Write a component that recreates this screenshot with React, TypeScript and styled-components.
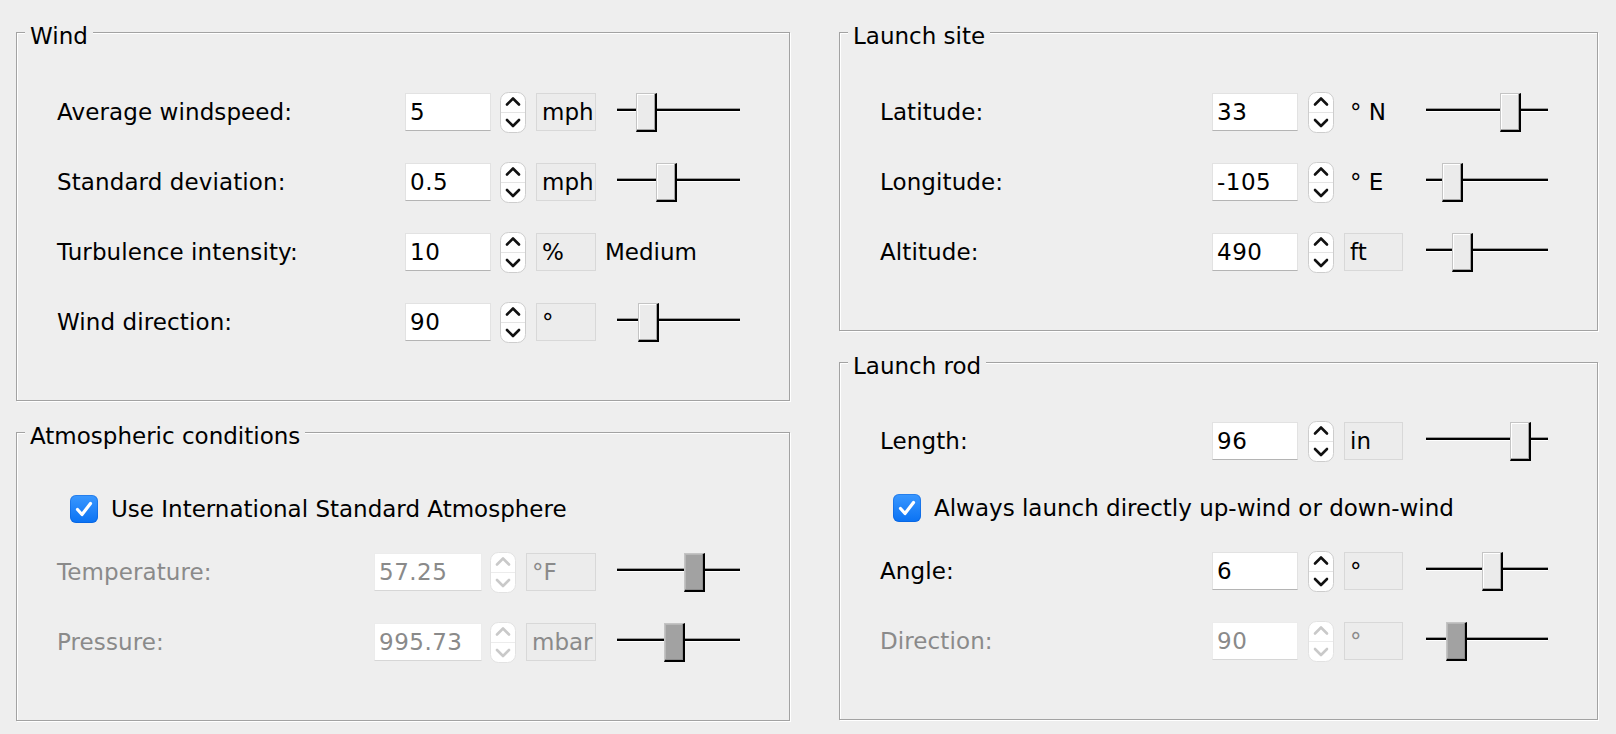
import React from 'react';
import styled, { createGlobalStyle } from 'styled-components';

const Global = createGlobalStyle`
  html, body { margin: 0; padding: 0; background: #eeeeee; }
  body {
    font-family: "DejaVu Sans", "Liberation Sans", sans-serif;
    font-size: 23px;
    color: #000;
  }
`;

const Page = styled.main`
  box-sizing: border-box;
  width: 1616px;
  height: 734px;
  display: grid;
  grid-template-columns: 774px 759px;
  align-items: start;
  column-gap: 49px;
  padding: 32px 18px 0 16px;
`;

const Column = styled.div`
  display: flex;
  flex-direction: column;
  gap: 31px;
`;

const Group = styled.section<{ $pt: number }>`
  position: relative;
  display: flex;
  flex-direction: column;
  gap: 32px;
  padding: ${(p) => p.$pt}px 49px 59px 40px;
  border: 1px solid #a2a2a2;
  box-shadow: inset 1px 1px 0 #ffffff, 1px 1px 0 #ffffff;
`;

const Legend = styled.h2`
  position: absolute;
  top: -10px;
  left: 8px;
  margin: 0;
  padding: 0 5px;
  background: #eeeeee;
  font-size: 23px;
  font-weight: normal;
  line-height: 26px;
  white-space: nowrap;
`;

const Row = styled.div`
  display: flex;
  align-items: center;
  height: 38px;
`;

const Label = styled.span<{ $disabled?: boolean }>`
  flex: 1;
  white-space: nowrap;
  letter-spacing: 0.1px;
  color: ${(p) => (p.$disabled ? '#8a8a8a' : '#000')};
`;

const Field = styled.input<{ $w: number; $disabled?: boolean }>`
  box-sizing: border-box;
  flex-shrink: 0;
  width: ${(p) => p.$w}px;
  height: 38px;
  margin: 0;
  padding: 0 0 0 4px;
  font: inherit;
  letter-spacing: 0.5px;
  color: ${(p) => (p.$disabled ? '#8a8a8a' : '#000')};
  -webkit-text-fill-color: ${(p) => (p.$disabled ? '#8a8a8a' : '#000')};
  opacity: 1;
  background: #ffffff;
  border: 1px solid ${(p) => (p.$disabled ? '#ececec' : '#e2e2e2')};
  border-bottom-color: ${(p) => (p.$disabled ? '#d6d6d6' : '#b4b4b4')};
  border-radius: 0;
  outline: none;
`;

const SpinBox = styled.span<{ $gap: number }>`
  display: block;
  flex-shrink: 0;
  width: 26px;
  height: 41px;
  margin-left: ${(p) => p.$gap}px;
  svg { display: block; }
`;

const Unit = styled.span<{ $w: number; $boxed: boolean; $disabled?: boolean }>`
  box-sizing: border-box;
  flex-shrink: 0;
  display: flex;
  align-items: center;
  width: ${(p) => p.$w}px;
  height: 38px;
  margin-left: 10px;
  padding-left: 5px;
  white-space: nowrap;
  color: ${(p) => (p.$disabled ? '#8a8a8a' : '#000')};
  background: ${(p) => (p.$boxed ? '#ececec' : 'transparent')};
  border: 1px solid ${(p) => (p.$boxed ? '#d8d8d8' : 'transparent')};
`;

const Slider = styled.div<{ $w: number; $gap: number }>`
  position: relative;
  flex-shrink: 0;
  width: ${(p) => p.$w}px;
  height: 39px;
  margin-left: ${(p) => p.$gap}px;
  &::before {
    content: '';
    position: absolute;
    left: 0;
    right: 0;
    top: 15px;
    height: 2px;
    background: #000;
    border-top: 1px solid #9c9c9c;
    border-bottom: 1px solid #ffffff;
  }
`;

const Thumb = styled.span<{ $disabled?: boolean }>`
  position: absolute;
  top: 0;
  box-sizing: border-box;
  width: 21px;
  height: 39px;
  background: ${(p) => (p.$disabled ? '#a2a2a2' : '#ebebeb')};
  border-style: solid;
  border-width: 1px 2px 2px 1px;
  border-color: #c4c4c4 #000 #000 #c4c4c4;
  box-shadow: inset -1px -1px 0 ${(p) => (p.$disabled ? '#8c8c8c' : '#a6a6a6')},
    inset 1px 1px 0 ${(p) => (p.$disabled ? '#b8b8b8' : '#ffffff')};
`;

const Level = styled.span`
  flex-shrink: 0;
  width: 135px;
  margin-left: 9px;
  white-space: nowrap;
`;

const CheckRow = styled.label`
  display: flex;
  align-items: center;
  gap: 13px;
  height: 28px;
  margin: 2px 0 -2px;
  padding-left: 13px;
  white-space: nowrap;
`;

const CheckBox = styled.span`
  flex-shrink: 0;
  width: 28px;
  height: 28px;
  border-radius: 6px;
  background: linear-gradient(#3a98ff, #0a72f3);
  box-shadow: inset 0 0 0 1px rgba(0, 80, 200, 0.35);
  svg { display: block; }
`;

const Spinner = ({ gap, disabled }: { gap: number; disabled?: boolean }) => {
  const c = disabled ? '#c9c9c9' : '#111';
  return (
    <SpinBox $gap={gap}>
      <svg width="26" height="41" viewBox="0 0 26 41">
        <rect x="0.5" y="0.5" width="25" height="40" rx="8" fill="#fff" stroke={disabled ? '#e2e2e2' : '#cdcdcd'} />
        <line x1="1" y1="20.5" x2="25" y2="20.5" stroke={disabled ? '#ececec' : '#e4e4e4'} />
        <path d="M7 12.5 L13 6.5 L19 12.5" fill="none" stroke={c} strokeWidth="2.6" strokeLinecap="round" strokeLinejoin="round" />
        <path d="M7 28 L13 34 L19 28" fill="none" stroke={c} strokeWidth="2.6" strokeLinecap="round" strokeLinejoin="round" />
      </svg>
    </SpinBox>
  );
};

type FieldItem = {
  kind: 'field';
  label: string;
  value: string;
  unit: string;
  boxed?: boolean;
  thumb?: number;
  level?: string;
  disabled?: boolean;
};
type CheckItem = { kind: 'check'; label: string };
type Item = FieldItem | CheckItem;

type GroupCfg = {
  title: string;
  pt: number;
  fieldW: number;
  unitW: number;
  spinGap: number;
  sliderGap: number;
  sliderW: number;
  items: Item[];
};

const left: GroupCfg[] = [
  {
    title: 'Wind',
    pt: 60,
    fieldW: 86,
    unitW: 60,
    spinGap: 9,
    sliderGap: 21,
    sliderW: 123,
    items: [
      { kind: 'field', label: 'Average windspeed:', value: '5', unit: 'mph', boxed: true, thumb: 19 },
      { kind: 'field', label: 'Standard deviation:', value: '0.5', unit: 'mph', boxed: true, thumb: 39 },
      { kind: 'field', label: 'Turbulence intensity:', value: '10', unit: '%', boxed: true, level: 'Medium' },
      { kind: 'field', label: 'Wind direction:', value: '90', unit: '°', boxed: true, thumb: 21 },
    ],
  },
  {
    title: 'Atmospheric conditions',
    pt: 60,
    fieldW: 108,
    unitW: 70,
    spinGap: 8,
    sliderGap: 21,
    sliderW: 123,
    items: [
      { kind: 'check', label: 'Use International Standard Atmosphere' },
      { kind: 'field', label: 'Temperature:', value: '57.25', unit: '°F', boxed: true, thumb: 67, disabled: true },
      { kind: 'field', label: 'Pressure:', value: '995.73', unit: 'mbar', boxed: true, thumb: 47, disabled: true },
    ],
  },
];

const right: GroupCfg[] = [
  {
    title: 'Launch site',
    pt: 60,
    fieldW: 86,
    unitW: 59,
    spinGap: 10,
    sliderGap: 23,
    sliderW: 122,
    items: [
      { kind: 'field', label: 'Latitude:', value: '33', unit: '° N', thumb: 74 },
      { kind: 'field', label: 'Longitude:', value: '-105', unit: '° E', thumb: 16 },
      { kind: 'field', label: 'Altitude:', value: '490', unit: 'ft', boxed: true, thumb: 26 },
    ],
  },
  {
    title: 'Launch rod',
    pt: 59,
    fieldW: 86,
    unitW: 59,
    spinGap: 10,
    sliderGap: 23,
    sliderW: 122,
    items: [
      { kind: 'field', label: 'Length:', value: '96', unit: 'in', boxed: true, thumb: 84 },
      { kind: 'check', label: 'Always launch directly up-wind or down-wind' },
      { kind: 'field', label: 'Angle:', value: '6', unit: '°', boxed: true, thumb: 56 },
      { kind: 'field', label: 'Direction:', value: '90', unit: '°', boxed: true, thumb: 20, disabled: true },
    ],
  },
];

const Check = () => (
  <CheckBox>
    <svg width="28" height="28" viewBox="0 0 28 28">
      <path d="M7.5 14.5 L12 19.5 L20.5 8.5" fill="none" stroke="#fff" strokeWidth="3.2" strokeLinecap="round" strokeLinejoin="round" />
    </svg>
  </CheckBox>
);

const GroupView = ({ g }: { g: GroupCfg }) => (
  <Group $pt={g.pt}>
    <Legend>{g.title}</Legend>
    {g.items.map((it, i) =>
      it.kind === 'check' ? (
        <CheckRow key={i}>
          <Check />
          <span>{it.label}</span>
        </CheckRow>
      ) : (
        <Row key={i}>
          <Label $disabled={it.disabled}>{it.label}</Label>
          <Field $w={g.fieldW} $disabled={it.disabled} defaultValue={it.value} readOnly disabled={it.disabled} />
          <Spinner gap={g.spinGap} disabled={it.disabled} />
          <Unit $w={g.unitW} $boxed={!!it.boxed} $disabled={it.disabled}>
            {it.unit}
          </Unit>
          {it.level ? (
            <Level>{it.level}</Level>
          ) : (
            <Slider $w={g.sliderW} $gap={g.sliderGap}>
              <Thumb $disabled={it.disabled} style={{ left: it.thumb ?? 0 }} />
            </Slider>
          )}
        </Row>
      )
    )}
  </Group>
);

export default function App() {
  return (
    <>
      <Global />
      <Page>
        <Column>
          {left.map((g) => (
            <GroupView key={g.title} g={g} />
          ))}
        </Column>
        <Column>
          {right.map((g) => (
            <GroupView key={g.title} g={g} />
          ))}
        </Column>
      </Page>
    </>
  );
}
